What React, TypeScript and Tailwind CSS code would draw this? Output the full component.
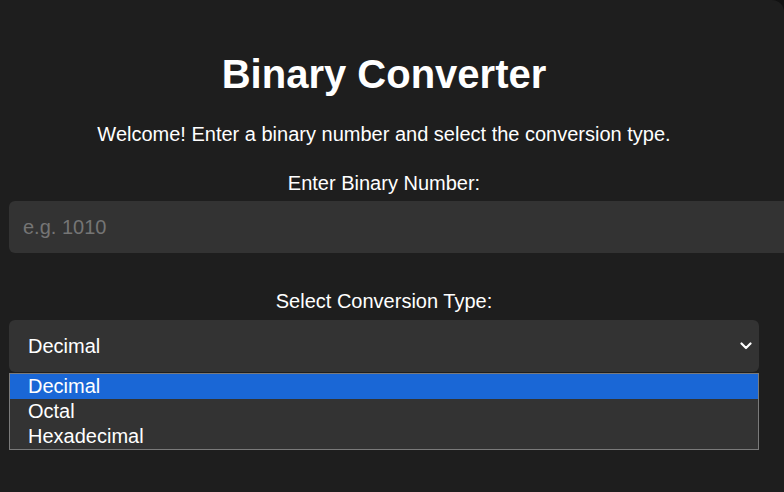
const options = ["Decimal", "Octal", "Hexadecimal"];

export default function App() {
  return (
    <div className="h-[492px] w-[784px] overflow-hidden bg-[#121212] font-['Liberation_Sans',Arial,sans-serif] text-white">
      <div className="h-full w-[784px] rounded-tr-[12px] bg-[#1e1e1e] pl-[9px] pt-[51px]">
        <div className="w-[750px]">
          <h1 className="text-center text-[40px] font-bold leading-[46px]">
            Binary Converter
          </h1>
          <p className="mt-[26px] text-center text-[20px] leading-[23px]">
            Welcome! Enter a binary number and select the conversion type.
          </p>

          <label className="mt-[26px] block text-center text-[20px] leading-[23px]">
            Enter Binary Number:
          </label>
          <input
            type="text"
            placeholder="e.g. 1010"
            className="mt-[6px] block h-[52px] w-[800px] rounded-[6px] bg-[#333333] px-[14px] text-[20px] text-white outline-none placeholder:text-[#757575]"
          />

          <label className="mt-[37px] block text-center text-[20px] leading-[23px]">
            Select Conversion Type:
          </label>
          <div className="relative mt-[7px]">
            <div className="flex h-[52px] items-center justify-between rounded-[6px] bg-[#333333] pl-[19px] pr-[7px] text-[20px]">
              <span>Decimal</span>
              <svg width="12" height="8" viewBox="0 0 12 8" fill="none">
                <path
                  d="M1.5 1.5 L6 6 L10.5 1.5"
                  stroke="white"
                  strokeWidth="2.2"
                  strokeLinecap="round"
                  strokeLinejoin="round"
                />
              </svg>
            </div>
            <ul className="absolute left-0 top-[53px] w-full border border-[#7a7a7a] bg-[#333333] text-[20px] leading-[25px]">
              {options.map((opt, i) => (
                <li
                  key={opt}
                  className={`h-[25px] pl-[18px] ${i === 0 ? "bg-[#1a67d6]" : ""}`}
                >
                  {opt}
                </li>
              ))}
            </ul>
          </div>
        </div>
      </div>
    </div>
  );
}
